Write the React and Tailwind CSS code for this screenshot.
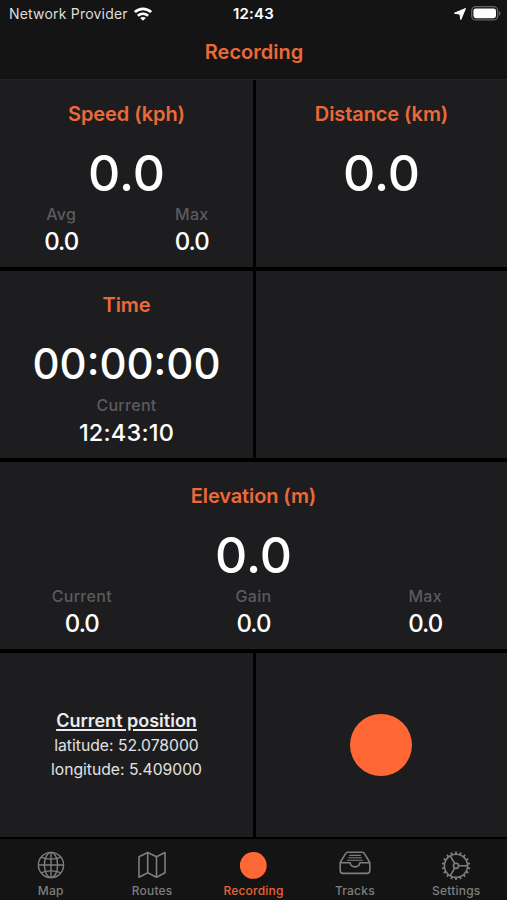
import React from "react";

const tabs = [
    { label: "Map", icon: <GlobeIcon /> },
    { label: "Routes", icon: <MapIcon /> },
    { label: "Recording", icon: <RecordIcon />, active: true },
    { label: "Tracks", icon: <TrayIcon /> },
    { label: "Settings", icon: <GearIcon /> },
];

const App = () => {
    return (
        <div className="flex flex-col w-full h-[900px] bg-black text-white overflow-hidden font-['Inter',sans-serif]">
            <header className="h-[79px] bg-[#141414] shrink-0">
                <StatusBar />
                <h1 className="mt-[10px] pl-px text-center text-[20px] leading-[28px] font-semibold text-[#eb6a39]">
                    Recording
                </h1>
            </header>

            <main className="h-[758px] shrink-0 grid grid-cols-[253px_251px] grid-rows-[187px_187px_187px_184px] gap-x-[3px] gap-y-1 border-t border-[#242426]">
                <Cell title="Speed (kph)">
                    <Value>0.0</Value>
                    <div className="grid grid-cols-2 mx-[-4px]">
                        <Stat label="Avg" value="0.0" />
                        <Stat label="Max" value="0.0" />
                    </div>
                </Cell>
                <Cell title="Distance (km)">
                    <Value>0.0</Value>
                </Cell>

                <Cell title="Time">
                    <div className="h-[60px] mt-[15px] text-center text-[42px] leading-[60px] font-medium">
                        00:00:00
                    </div>
                    <Stat label="Current" value="12:43:10" long />
                </Cell>
                <Cell />

                <Cell title="Elevation (m)" wide>
                    <Value>0.0</Value>
                    <div className="grid grid-cols-3 mx-[-4px]">
                        <Stat label="Current" value="0.0" />
                        <Stat label="Gain" value="0.0" />
                        <Stat label="Max" value="0.0" />
                    </div>
                </Cell>

                <div className="bg-[#1d1d1f] pt-[56px] text-center text-[#e2e2e2]">
                    <h2 className="text-[18px] leading-6 font-semibold underline decoration-2 underline-offset-2 text-[#ececec]">
                        Current position
                    </h2>
                    <p className="text-[15.7px] leading-[25px]">latitude: 52.078000</p>
                    <p className="text-[15.7px] leading-[24px]">longitude: 5.409000</p>
                </div>
                <div className="bg-[#1d1d1f] flex items-center justify-center">
                    <button className="size-[62px] mr-px rounded-full bg-[#ff6835]" aria-label="Record" />
                </div>
            </main>

            <nav className="grow mt-[2px] pt-[11px] grid grid-cols-5 bg-[#141414]">
                {tabs.map((tab) => (
                    <Tab key={tab.label} {...tab} />
                ))}
            </nav>
        </div>
    );
};

const StatusBar = () => (
    <div className="h-[28px] px-[7px] grid grid-cols-3 items-center text-[14px]">
        <div className="flex items-center gap-[6px] pl-[2px] pb-px whitespace-nowrap text-[#dedede]">
            <span className="tracking-[0.2px]">Network Provider</span>
            <svg width="18" height="14" viewBox="0 0 18 14" fill="none" stroke="#fff" strokeWidth="2.7">
                <path d="M.9 5.1C5.6.7 12.4.7 17.1 5.1" />
                <path d="M3.9 8.7c2.9-2.6 7.3-2.6 10.2 0" />
                <path d="M9 13.8 6.2 11c1.6-1.3 4-1.3 5.6 0z" fill="#fff" stroke="none" />
            </svg>
        </div>
        <div className="text-center text-[15px] font-semibold tracking-[0.2px]">12:43</div>
        <div className="flex items-center justify-end gap-[5px] -mr-px pb-px">
            <svg width="12" height="12" viewBox="0 0 12 12" fill="#fff">
                <path d="M11.5.5 6.8 11.6 6 6.2.4 5.2z" stroke="#fff" strokeWidth="1" strokeLinejoin="round" />
            </svg>
            <svg width="30" height="15" viewBox="0 0 30 15">
                <rect x=".7" y=".7" width="26" height="13.2" rx="4" fill="none" stroke="#646464" strokeWidth="1.3" />
                <rect x="2.4" y="2.4" width="22.6" height="9.8" rx="2.4" fill="#fff" />
                <path d="M28 5v4.8c2-.9 2-3.9 0-4.8z" fill="#646464" />
            </svg>
        </div>
    </div>
);

const Cell = ({ title, wide, children }) => (
    <section className={`bg-[#1d1d1f] pt-[20px] ${wide ? "col-span-2" : ""}`}>
        {title && (
            <h2 className="text-center text-[20px] leading-[28px] tracking-[-0.1px] font-semibold text-[#eb6a39]">
                {title}
            </h2>
        )}
        {children}
    </section>
);

const Value = ({ children }) => (
    <div className="h-[60px] mt-[15px] text-center text-[50px] leading-[60px] font-medium">
        {children}
    </div>
);

const Stat = ({ label, value, long }) => (
    <div className="text-center">
        <div className="text-[16px] leading-[22px] tracking-[0.3px] font-medium text-[#5b5b5d]">{label}</div>
        <div className={`leading-[34px] font-medium ${long ? "text-[23.5px] tracking-[0.2px]" : "text-[24px] tracking-[-1px]"}`}>
            {value}
        </div>
    </div>
);

const Tab = ({ label, icon, active }) => (
    <div className={`flex flex-col items-center ${active ? "text-[#e96436]" : "text-[#7e7e7e]"}`}>
        {icon}
        <span className="mt-[2px] text-[12px] leading-[18px] tracking-[0.2px] font-medium">{label}</span>
    </div>
);

function GlobeIcon() {
    return (
        <svg width="32" height="30" viewBox="-16 -15 32 30" fill="none" stroke="currentColor" strokeWidth="1.4">
            <circle r="12.6" />
            <ellipse rx="6.6" ry="12.6" />
            <path d="M0-12.6V12.6M-12.6 0H12.6" />
            <path d="M-9.8-7.8c5 2.6 14.6 2.6 19.6 0M-9.8 7.8c5-2.6 14.6-2.6 19.6 0" />
        </svg>
    );
}

function MapIcon() {
    return (
        <svg width="32" height="30" viewBox="0 0 32 30" fill="none" stroke="currentColor" strokeWidth="1.6" strokeLinejoin="round">
            <path d="M3 6.8 11.7 2.5 20.5 6.8 29 2.5V22.8L20.5 27.2 11.7 22.8 3 27.2z" />
            <path d="M11.7 2.5V22.8M20.5 6.8V27.2" />
        </svg>
    );
}

function RecordIcon() {
    return (
        <svg width="32" height="30" viewBox="-16 -15 32 30">
            <circle cx=".3" cy=".4" r="13.4" fill="#ff6835" />
        </svg>
    );
}

function TrayIcon() {
    return (
        <svg width="34" height="30" viewBox="0 0 34 30" fill="none" stroke="currentColor" strokeWidth="1.6" strokeLinejoin="round">
            <path d="M2.2 12.5 7.4 3.8Q8.2 2.3 9.8 2.3H24.2Q25.8 2.3 26.6 3.8L31.8 12.5V20.6Q31.8 23.4 29 23.4H5Q2.2 23.4 2.2 20.6z" />
            <path d="M2.2 12.8H12.2C12.6 18.2 21.4 18.2 21.8 12.8H31.8" />
            <path d="M11.2 5.4H22.8M10.2 7.8H23.8M9.2 10.2H24.8" strokeWidth="1.1" />
        </svg>
    );
}

function GearIcon() {
    const teeth = Array.from({ length: 18 }, (_, i) => i * 20 + 10);

    return (
        <svg width="32" height="30" viewBox="-16 -15 32 30" fill="none" stroke="currentColor" strokeWidth="1.6">
            <g transform="translate(0 .8)">
                <circle r="11.6" />
                <circle r="2.6" />
                <path d="M2.7 0H11.6M-1.35-2.34-5.8-10.05M-1.35 2.34-5.8 10.05" />
                {teeth.map((deg) => (
                    <path key={deg} d="M11.6 0H14.2" strokeWidth="1.8" transform={`rotate(${deg})`} />
                ))}
            </g>
        </svg>
    );
}

export default App;
